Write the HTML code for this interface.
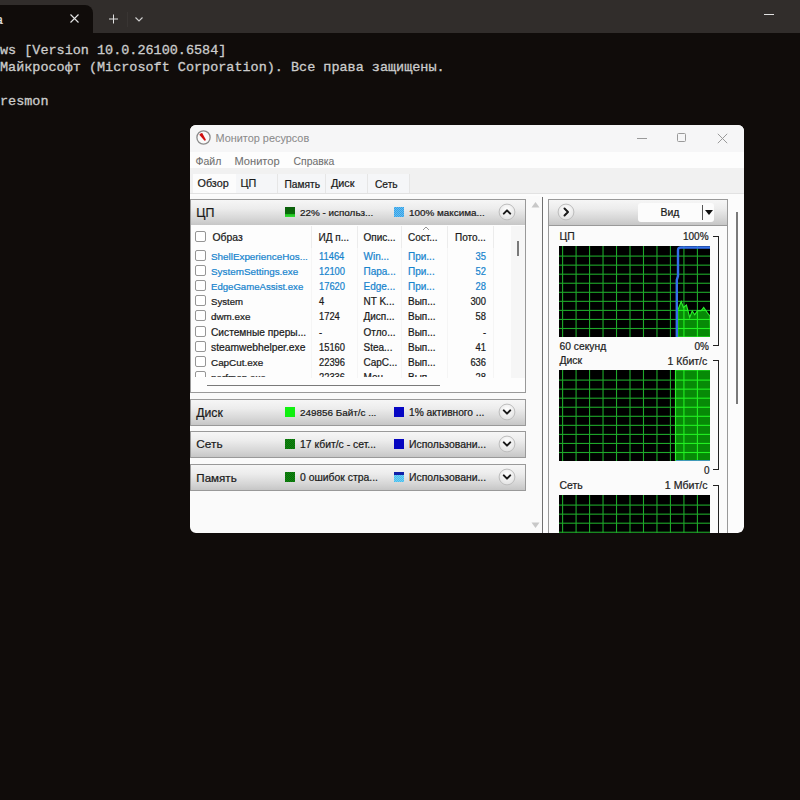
<!DOCTYPE html>
<html><head><meta charset="utf-8"><style>
html,body{margin:0;padding:0;width:800px;height:800px;overflow:hidden;background:#100c0a}
.t{position:absolute;white-space:pre;-webkit-text-stroke:0.22px currentColor}
.r{position:absolute}
</style></head><body>
<div class="r" style="left:0px;top:0px;width:800px;height:33px;background:#312d2b"></div>
<div class="r" style="left:-20px;top:5px;width:113px;height:28px;background:#100c0a;border-radius:0 8px 0 0"></div>
<div class="t " style="left:-4px;top:14px;font-size:12px;line-height:12px;color:#e8e8e8;font-family:'Liberation Sans',sans-serif;">а</div>
<svg class="r" style="left:70px;top:14px" width="9" height="9" viewBox="0 0 9 9"><path d="M0.5 0.5L8.5 8.5M8.5 0.5L0.5 8.5" stroke="#e4e4e4" stroke-width="1.1"/></svg>
<svg class="r" style="left:107px;top:13px" width="12" height="12" viewBox="0 0 12 12"><path d="M6.5 1.5V10.5M2 6H11" stroke="#e0e0e0" stroke-width="1"/></svg>
<div class="r" style="left:127px;top:12px;width:1px;height:15px;background:#393533"></div>
<svg class="r" style="left:134px;top:15px" width="10" height="8" viewBox="0 0 10 8"><path d="M1.5 2.5L5 6L8.5 2.5" stroke="#d0d0d0" stroke-width="1.1" fill="none"/></svg>
<div class="r" style="left:764px;top:14px;width:10px;height:1.2px;background:#e0e0e0"></div>
<div class="t " style="left:0px;top:44px;font-size:13.47px;line-height:13.47px;color:#cccccc;font-family:'Liberation Mono',monospace;-webkit-text-stroke:0.3px currentColor">ws [Version 10.0.26100.6584]</div>
<div class="t " style="left:0px;top:61px;font-size:13.47px;line-height:13.47px;color:#cccccc;font-family:'Liberation Mono',monospace;-webkit-text-stroke:0.3px currentColor">Майкрософт (Microsoft Corporation). Все права защищены.</div>
<div class="t " style="left:0px;top:95px;font-size:13.47px;line-height:13.47px;color:#cccccc;font-family:'Liberation Mono',monospace;-webkit-text-stroke:0.3px currentColor">resmon</div>
<div class="r" style="left:190px;top:125px;width:554px;height:408px;background:#fcfcfc;border-radius:6px;overflow:hidden"></div>
<div class="r" style="left:190px;top:125px;width:554px;height:27px;background:#f6f6f7;border-radius:6px 6px 0 0"></div>
<div class="r" style="left:190px;top:152px;width:554px;height:16px;background:#fdfdfd"></div>
<svg class="r" style="left:195px;top:129px" width="17" height="17" viewBox="0 0 17 17"><circle cx="8.5" cy="8.5" r="6.6" fill="#fafafa" stroke="#8c8c8c" stroke-width="1.3"/><path d="M6.6 3.4 Q5.0 3.2 3.7 5.2 L8.7 11.0 Q9.8 11.5 10.3 10.2Z" fill="#d01010" transform="translate(0.6 0.5)"/></svg>
<div class="t " style="left:215.5px;top:133px;font-size:10.9px;line-height:10.9px;color:#8a8a8a;font-family:'Liberation Sans',sans-serif;-webkit-text-stroke:0.05px currentColor">Монитор ресурсов</div>
<div class="r" style="left:637px;top:138px;width:10px;height:1px;background:#9a9a9a"></div>
<div class="r" style="left:677px;top:133px;width:9px;height:9px;border:1px solid #9a9a9a;box-sizing:border-box;border-radius:1.5px"></div>
<svg class="r" style="left:717px;top:133px" width="11" height="11" viewBox="0 0 11 11"><path d="M0.8 0.8L10.2 10.2M10.2 0.8L0.8 10.2" stroke="#9a9a9a" stroke-width="1"/></svg>
<div class="t " style="left:195.5px;top:156px;font-size:10.5px;line-height:10.5px;color:#707070;font-family:'Liberation Sans',sans-serif;-webkit-text-stroke:0.08px currentColor">Файл</div>
<div class="t " style="left:234.5px;top:156px;font-size:11.1px;line-height:11.1px;color:#707070;font-family:'Liberation Sans',sans-serif;-webkit-text-stroke:0.08px currentColor">Монитор</div>
<div class="t " style="left:293.5px;top:157px;font-size:10.4px;line-height:10.4px;color:#707070;font-family:'Liberation Sans',sans-serif;-webkit-text-stroke:0.08px currentColor">Справка</div>
<div class="r" style="left:190px;top:168px;width:554px;height:25px;background:#f1f1f1"></div>
<div class="r" style="left:190px;top:193px;width:554px;height:1px;background:#e2e2e2"></div>
<div class="r" style="left:193px;top:174px;width:43px;height:19px;background:#fcfcfc"></div>
<div class="r" style="left:236px;top:174px;width:42px;height:19px;background:#f5f6f8;border-right:1px solid #e6e6e6;box-sizing:border-box"></div>
<div class="r" style="left:278px;top:174px;width:48px;height:19px;background:#f5f6f8;border-right:1px solid #e6e6e6;box-sizing:border-box"></div>
<div class="r" style="left:326px;top:174px;width:42px;height:19px;background:#f5f6f8;border-right:1px solid #e6e6e6;box-sizing:border-box"></div>
<div class="r" style="left:368px;top:174px;width:42px;height:19px;background:#f5f6f8;border-right:1px solid #e6e6e6;box-sizing:border-box"></div>
<div class="t " style="left:197.5px;top:178px;font-size:10.8px;line-height:10.8px;color:#1a1a1a;font-family:'Liberation Sans',sans-serif;">Обзор</div>
<div class="t " style="left:240.5px;top:178px;font-size:10.8px;line-height:10.8px;color:#1a1a1a;font-family:'Liberation Sans',sans-serif;">ЦП</div>
<div class="t " style="left:284.5px;top:180px;font-size:10.2px;line-height:10.2px;color:#1a1a1a;font-family:'Liberation Sans',sans-serif;">Память</div>
<div class="t " style="left:331px;top:178px;font-size:10.8px;line-height:10.8px;color:#1a1a1a;font-family:'Liberation Sans',sans-serif;">Диск</div>
<div class="t " style="left:375px;top:180px;font-size:10.2px;line-height:10.2px;color:#1a1a1a;font-family:'Liberation Sans',sans-serif;">Сеть</div>
<div class="r" style="left:190px;top:196px;width:353px;height:337px;background:#fafafa"></div>
<div class="r" style="left:190px;top:199px;width:336px;height:27px;background:linear-gradient(#f6f6f6 0%,#ececec 35%,#d6d6d6 75%,#c6c6c6 100%);border:1px solid #999;box-sizing:border-box"></div>
<div class="t " style="left:196.3px;top:207px;font-size:12.4px;line-height:12.4px;color:#1a1a1a;font-family:'Liberation Sans',sans-serif;">ЦП</div>
<div class="r" style="left:285px;top:207px;width:10px;height:10px;background:linear-gradient(#0a5e0a 0,#0a6e0a 65%,#20c020 75%,#34e034 100%)"></div>
<div class="t " style="left:300px;top:208px;font-size:9.9px;line-height:9.9px;color:#1a1a1a;font-family:'Liberation Sans',sans-serif;">22% - использ...</div>
<div class="r" style="left:394px;top:207px;width:10px;height:10px;background:repeating-conic-gradient(#3a9ee6 0 25%,#62c2f2 0 50%) 0 0/2px 2px"></div>
<div class="t " style="left:409px;top:208px;font-size:9.9px;line-height:9.9px;color:#1a1a1a;font-family:'Liberation Sans',sans-serif;">100% максима...</div>
<svg class="r" style="left:496.5px;top:201.6px" width="20" height="20" viewBox="0 0 20 20"><defs><radialGradient id="cg199" cx="50%" cy="35%" r="65%"><stop offset="0" stop-color="#ffffff"/><stop offset="1" stop-color="#e2e2e2"/></radialGradient></defs><circle cx="10" cy="10" r="7.9" fill="url(#cg199)" stroke="#bdbdbd" stroke-width="1"/><path d="M6.8 11.6L10 8.4L13.2 11.6" stroke="#1a1a1a" stroke-width="2" fill="none" stroke-linecap="round" stroke-linejoin="round"/></svg>
<div class="r" style="left:190px;top:225px;width:336px;height:168px;background:#fdfdfd;border-left:1px solid #999;border-right:1px solid #999;border-bottom:1px solid #999;box-sizing:border-box"></div>
<div class="r" style="left:311px;top:226px;width:1px;height:152px;background:#f5f5f5"></div>
<div class="r" style="left:311px;top:226px;width:1px;height:22px;background:#ececec"></div>
<div class="r" style="left:357px;top:226px;width:1px;height:152px;background:#f5f5f5"></div>
<div class="r" style="left:357px;top:226px;width:1px;height:22px;background:#ececec"></div>
<div class="r" style="left:401px;top:226px;width:1px;height:152px;background:#f5f5f5"></div>
<div class="r" style="left:401px;top:226px;width:1px;height:22px;background:#ececec"></div>
<div class="r" style="left:447px;top:226px;width:1px;height:152px;background:#f5f5f5"></div>
<div class="r" style="left:447px;top:226px;width:1px;height:22px;background:#ececec"></div>
<div class="r" style="left:493px;top:226px;width:1px;height:152px;background:#f5f5f5"></div>
<div class="r" style="left:493px;top:226px;width:1px;height:22px;background:#ececec"></div>
<div class="r" style="left:195px;top:231px;width:11px;height:11px;border:1px solid #959595;border-radius:2px;box-sizing:border-box;background:#fff"></div>
<div class="t " style="left:212.5px;top:233px;font-size:10.4px;line-height:10.4px;color:#1a1a1a;font-family:'Liberation Sans',sans-serif;">Образ</div>
<div class="t " style="left:318.5px;top:233px;font-size:10.0px;line-height:10.0px;color:#1a1a1a;font-family:'Liberation Sans',sans-serif;">ИД п...</div>
<div class="t " style="left:363.5px;top:233px;font-size:10.0px;line-height:10.0px;color:#1a1a1a;font-family:'Liberation Sans',sans-serif;">Опис...</div>
<div class="t " style="left:408px;top:233px;font-size:10.0px;line-height:10.0px;color:#1a1a1a;font-family:'Liberation Sans',sans-serif;">Сост...</div>
<div class="t " style="left:455px;top:233px;font-size:10.0px;line-height:10.0px;color:#1a1a1a;font-family:'Liberation Sans',sans-serif;">Пото...</div>
<svg class="r" style="left:422px;top:225.8px" width="8" height="5" viewBox="0 0 8 5"><path d="M1 4L4 1L7 4" stroke="#888" stroke-width="0.9" fill="none"/></svg>
<div class="r" style="left:191px;top:245px;width:320px;height:131.5px;overflow:hidden">
<div class="r" style="left:4px;top:4.600000000000023px;width:11px;height:11px;border:1px solid #959595;border-radius:2px;box-sizing:border-box;background:#fff"></div>
<div class="t " style="left:20px;top:7px;font-size:9.85px;line-height:9.85px;color:#1784cd;font-family:'Liberation Sans',sans-serif;">ShellExperienceHos...</div>
<div class="t " style="left:127.5px;top:7px;font-size:10.4px;line-height:10.4px;color:#1784cd;font-family:'Liberation Sans',sans-serif;transform:scaleX(0.9);transform-origin:0 0">11464</div>
<div class="t " style="left:172.5px;top:7px;font-size:10px;line-height:10px;color:#1784cd;font-family:'Liberation Sans',sans-serif;">Win...</div>
<div class="t " style="left:217px;top:7px;font-size:10px;line-height:10px;color:#1784cd;font-family:'Liberation Sans',sans-serif;">При...</div>
<div class="t" style="left:229px;width:66px;text-align:right;top:7px;font-size:10.4px;line-height:10.4px;transform:scaleX(0.9);transform-origin:100% 0;color:#1784cd;font-family:'Liberation Sans',sans-serif">35</div>
<div class="r" style="left:4px;top:19.82000000000005px;width:11px;height:11px;border:1px solid #959595;border-radius:2px;box-sizing:border-box;background:#fff"></div>
<div class="t " style="left:20px;top:22px;font-size:9.9px;line-height:9.9px;color:#1784cd;font-family:'Liberation Sans',sans-serif;">SystemSettings.exe</div>
<div class="t " style="left:127.5px;top:22px;font-size:10.4px;line-height:10.4px;color:#1784cd;font-family:'Liberation Sans',sans-serif;transform:scaleX(0.9);transform-origin:0 0">12100</div>
<div class="t " style="left:172.5px;top:22px;font-size:10px;line-height:10px;color:#1784cd;font-family:'Liberation Sans',sans-serif;">Пара...</div>
<div class="t " style="left:217px;top:22px;font-size:10px;line-height:10px;color:#1784cd;font-family:'Liberation Sans',sans-serif;">При...</div>
<div class="t" style="left:229px;width:66px;text-align:right;top:22px;font-size:10.4px;line-height:10.4px;transform:scaleX(0.9);transform-origin:100% 0;color:#1784cd;font-family:'Liberation Sans',sans-serif">52</div>
<div class="r" style="left:4px;top:35.04000000000002px;width:11px;height:11px;border:1px solid #959595;border-radius:2px;box-sizing:border-box;background:#fff"></div>
<div class="t " style="left:20px;top:37px;font-size:9.6px;line-height:9.6px;color:#1784cd;font-family:'Liberation Sans',sans-serif;">EdgeGameAssist.exe</div>
<div class="t " style="left:127.5px;top:37px;font-size:10.4px;line-height:10.4px;color:#1784cd;font-family:'Liberation Sans',sans-serif;transform:scaleX(0.9);transform-origin:0 0">17620</div>
<div class="t " style="left:172.5px;top:37px;font-size:10px;line-height:10px;color:#1784cd;font-family:'Liberation Sans',sans-serif;">Edge...</div>
<div class="t " style="left:217px;top:37px;font-size:10px;line-height:10px;color:#1784cd;font-family:'Liberation Sans',sans-serif;">При...</div>
<div class="t" style="left:229px;width:66px;text-align:right;top:37px;font-size:10.4px;line-height:10.4px;transform:scaleX(0.9);transform-origin:100% 0;color:#1784cd;font-family:'Liberation Sans',sans-serif">28</div>
<div class="r" style="left:4px;top:50.26000000000005px;width:11px;height:11px;border:1px solid #959595;border-radius:2px;box-sizing:border-box;background:#fff"></div>
<div class="t " style="left:20px;top:52px;font-size:9.6px;line-height:9.6px;color:#1a1a1a;font-family:'Liberation Sans',sans-serif;">System</div>
<div class="t " style="left:127.5px;top:52px;font-size:10.4px;line-height:10.4px;color:#1a1a1a;font-family:'Liberation Sans',sans-serif;transform:scaleX(0.9);transform-origin:0 0">4</div>
<div class="t " style="left:172.5px;top:52px;font-size:10px;line-height:10px;color:#1a1a1a;font-family:'Liberation Sans',sans-serif;">NT K...</div>
<div class="t " style="left:217px;top:52px;font-size:10px;line-height:10px;color:#1a1a1a;font-family:'Liberation Sans',sans-serif;">Вып...</div>
<div class="t" style="left:229px;width:66px;text-align:right;top:52px;font-size:10.4px;line-height:10.4px;transform:scaleX(0.9);transform-origin:100% 0;color:#1a1a1a;font-family:'Liberation Sans',sans-serif">300</div>
<div class="r" style="left:4px;top:65.48000000000002px;width:11px;height:11px;border:1px solid #959595;border-radius:2px;box-sizing:border-box;background:#fff"></div>
<div class="t " style="left:20px;top:67px;font-size:9.9px;line-height:9.9px;color:#1a1a1a;font-family:'Liberation Sans',sans-serif;">dwm.exe</div>
<div class="t " style="left:127.5px;top:67px;font-size:10.4px;line-height:10.4px;color:#1a1a1a;font-family:'Liberation Sans',sans-serif;transform:scaleX(0.9);transform-origin:0 0">1724</div>
<div class="t " style="left:172.5px;top:67px;font-size:10px;line-height:10px;color:#1a1a1a;font-family:'Liberation Sans',sans-serif;">Дисп...</div>
<div class="t " style="left:217px;top:67px;font-size:10px;line-height:10px;color:#1a1a1a;font-family:'Liberation Sans',sans-serif;">Вып...</div>
<div class="t" style="left:229px;width:66px;text-align:right;top:67px;font-size:10.4px;line-height:10.4px;transform:scaleX(0.9);transform-origin:100% 0;color:#1a1a1a;font-family:'Liberation Sans',sans-serif">58</div>
<div class="r" style="left:4px;top:80.70000000000005px;width:11px;height:11px;border:1px solid #959595;border-radius:2px;box-sizing:border-box;background:#fff"></div>
<div class="t " style="left:20px;top:83px;font-size:10.2px;line-height:10.2px;color:#1a1a1a;font-family:'Liberation Sans',sans-serif;">Системные преры...</div>
<div class="t " style="left:127.5px;top:83px;font-size:10.4px;line-height:10.4px;color:#1a1a1a;font-family:'Liberation Sans',sans-serif;transform:scaleX(0.9);transform-origin:0 0">-</div>
<div class="t " style="left:172.5px;top:83px;font-size:10px;line-height:10px;color:#1a1a1a;font-family:'Liberation Sans',sans-serif;">Отло...</div>
<div class="t " style="left:217px;top:83px;font-size:10px;line-height:10px;color:#1a1a1a;font-family:'Liberation Sans',sans-serif;">Вып...</div>
<div class="t" style="left:229px;width:66px;text-align:right;top:83px;font-size:10.4px;line-height:10.4px;transform:scaleX(0.9);transform-origin:100% 0;color:#1a1a1a;font-family:'Liberation Sans',sans-serif">-</div>
<div class="r" style="left:4px;top:95.92000000000002px;width:11px;height:11px;border:1px solid #959595;border-radius:2px;box-sizing:border-box;background:#fff"></div>
<div class="t " style="left:20px;top:98px;font-size:10.3px;line-height:10.3px;color:#1a1a1a;font-family:'Liberation Sans',sans-serif;">steamwebhelper.exe</div>
<div class="t " style="left:127.5px;top:98px;font-size:10.4px;line-height:10.4px;color:#1a1a1a;font-family:'Liberation Sans',sans-serif;transform:scaleX(0.9);transform-origin:0 0">15160</div>
<div class="t " style="left:172.5px;top:98px;font-size:10px;line-height:10px;color:#1a1a1a;font-family:'Liberation Sans',sans-serif;">Stea...</div>
<div class="t " style="left:217px;top:98px;font-size:10px;line-height:10px;color:#1a1a1a;font-family:'Liberation Sans',sans-serif;">Вып...</div>
<div class="t" style="left:229px;width:66px;text-align:right;top:98px;font-size:10.4px;line-height:10.4px;transform:scaleX(0.9);transform-origin:100% 0;color:#1a1a1a;font-family:'Liberation Sans',sans-serif">41</div>
<div class="r" style="left:4px;top:111.14000000000004px;width:11px;height:11px;border:1px solid #959595;border-radius:2px;box-sizing:border-box;background:#fff"></div>
<div class="t " style="left:20px;top:113px;font-size:9.9px;line-height:9.9px;color:#1a1a1a;font-family:'Liberation Sans',sans-serif;">CapCut.exe</div>
<div class="t " style="left:127.5px;top:113px;font-size:10.4px;line-height:10.4px;color:#1a1a1a;font-family:'Liberation Sans',sans-serif;transform:scaleX(0.9);transform-origin:0 0">22396</div>
<div class="t " style="left:172.5px;top:113px;font-size:10px;line-height:10px;color:#1a1a1a;font-family:'Liberation Sans',sans-serif;">CapC...</div>
<div class="t " style="left:217px;top:113px;font-size:10px;line-height:10px;color:#1a1a1a;font-family:'Liberation Sans',sans-serif;">Вып...</div>
<div class="t" style="left:229px;width:66px;text-align:right;top:113px;font-size:10.4px;line-height:10.4px;transform:scaleX(0.9);transform-origin:100% 0;color:#1a1a1a;font-family:'Liberation Sans',sans-serif">636</div>
<div class="r" style="left:4px;top:126.36000000000001px;width:11px;height:11px;border:1px solid #959595;border-radius:2px;box-sizing:border-box;background:#fff"></div>
<div class="t " style="left:20px;top:128px;font-size:9.9px;line-height:9.9px;color:#1a1a1a;font-family:'Liberation Sans',sans-serif;">perfmon.exe</div>
<div class="t " style="left:127.5px;top:128px;font-size:10.4px;line-height:10.4px;color:#1a1a1a;font-family:'Liberation Sans',sans-serif;transform:scaleX(0.9);transform-origin:0 0">22336</div>
<div class="t " style="left:172.5px;top:128px;font-size:10px;line-height:10px;color:#1a1a1a;font-family:'Liberation Sans',sans-serif;">Мон...</div>
<div class="t " style="left:217px;top:128px;font-size:10px;line-height:10px;color:#1a1a1a;font-family:'Liberation Sans',sans-serif;">Вып...</div>
<div class="t" style="left:229px;width:66px;text-align:right;top:128px;font-size:10.4px;line-height:10.4px;transform:scaleX(0.9);transform-origin:100% 0;color:#1a1a1a;font-family:'Liberation Sans',sans-serif">28</div>
</div>
<div class="r" style="left:511px;top:226px;width:14px;height:152px;background:#f6f6f6"></div>
<div class="r" style="left:517px;top:241px;width:1.6px;height:15px;background:#7a7a7a"></div>
<div class="r" style="left:207px;top:384.5px;width:233px;height:1.5px;background:#7a7a7a"></div>
<div class="r" style="left:190px;top:399px;width:336px;height:27px;background:linear-gradient(#f6f6f6 0%,#ececec 35%,#d6d6d6 75%,#c6c6c6 100%);border:1px solid #999;box-sizing:border-box"></div>
<div class="t " style="left:196.3px;top:407px;font-size:12.2px;line-height:12.2px;color:#1a1a1a;font-family:'Liberation Sans',sans-serif;">Диск</div>
<div class="r" style="left:285px;top:407px;width:10px;height:10px;background:#10f010"></div>
<div class="t " style="left:300px;top:408px;font-size:9.9px;line-height:9.9px;color:#1a1a1a;font-family:'Liberation Sans',sans-serif;">249856 Байт/с ...</div>
<div class="r" style="left:394px;top:407px;width:10px;height:10px;background:#0606c4"></div>
<div class="t " style="left:409px;top:408px;font-size:9.9px;line-height:9.9px;color:#1a1a1a;font-family:'Liberation Sans',sans-serif;"><span style="font-size:10.2px">1% активного ...</span></div>
<svg class="r" style="left:496.5px;top:401.6px" width="20" height="20" viewBox="0 0 20 20"><defs><radialGradient id="cg399" cx="50%" cy="35%" r="65%"><stop offset="0" stop-color="#ffffff"/><stop offset="1" stop-color="#e2e2e2"/></radialGradient></defs><circle cx="10" cy="10" r="7.9" fill="url(#cg399)" stroke="#bdbdbd" stroke-width="1"/><path d="M6.8 8.4L10 11.6L13.2 8.4" stroke="#1a1a1a" stroke-width="2" fill="none" stroke-linecap="round" stroke-linejoin="round"/></svg>
<div class="r" style="left:190px;top:431px;width:336px;height:27px;background:linear-gradient(#f6f6f6 0%,#ececec 35%,#d6d6d6 75%,#c6c6c6 100%);border:1px solid #999;box-sizing:border-box"></div>
<div class="t " style="left:196.3px;top:439px;font-size:11.8px;line-height:11.8px;color:#1a1a1a;font-family:'Liberation Sans',sans-serif;">Сеть</div>
<div class="r" style="left:285px;top:439px;width:10px;height:10px;background:repeating-conic-gradient(#0a6a0a 0 25%,#108a10 0 50%) 0 0/2px 2px"></div>
<div class="t " style="left:300px;top:440px;font-size:9.9px;line-height:9.9px;color:#1a1a1a;font-family:'Liberation Sans',sans-serif;"><span style="font-size:10.4px">17 кбит/с - сет...</span></div>
<div class="r" style="left:394px;top:439px;width:10px;height:10px;background:#0606c0"></div>
<div class="t " style="left:409px;top:440px;font-size:9.9px;line-height:9.9px;color:#1a1a1a;font-family:'Liberation Sans',sans-serif;"><span style="font-size:10.4px">Использовани...</span></div>
<svg class="r" style="left:496.5px;top:433.6px" width="20" height="20" viewBox="0 0 20 20"><defs><radialGradient id="cg431" cx="50%" cy="35%" r="65%"><stop offset="0" stop-color="#ffffff"/><stop offset="1" stop-color="#e2e2e2"/></radialGradient></defs><circle cx="10" cy="10" r="7.9" fill="url(#cg431)" stroke="#bdbdbd" stroke-width="1"/><path d="M6.8 8.4L10 11.6L13.2 8.4" stroke="#1a1a1a" stroke-width="2" fill="none" stroke-linecap="round" stroke-linejoin="round"/></svg>
<div class="r" style="left:190px;top:464px;width:336px;height:27px;background:linear-gradient(#f6f6f6 0%,#ececec 35%,#d6d6d6 75%,#c6c6c6 100%);border:1px solid #999;box-sizing:border-box"></div>
<div class="t " style="left:196.3px;top:472px;font-size:11.6px;line-height:11.6px;color:#1a1a1a;font-family:'Liberation Sans',sans-serif;">Память</div>
<div class="r" style="left:285px;top:472px;width:10px;height:10px;background:repeating-conic-gradient(#0a6a0a 0 25%,#108a10 0 50%) 0 0/2px 2px"></div>
<div class="t " style="left:300px;top:473px;font-size:9.9px;line-height:9.9px;color:#1a1a1a;font-family:'Liberation Sans',sans-serif;"><span style="font-size:10.4px">0 ошибок стра...</span></div>
<div class="r" style="left:394px;top:472px;width:10px;height:10px;background:linear-gradient(#1020a8 0 3px,transparent 3px),repeating-conic-gradient(#48bcec 0 25%,#70d0f4 0 50%) 0 0/2px 2px"></div>
<div class="t " style="left:409px;top:473px;font-size:9.9px;line-height:9.9px;color:#1a1a1a;font-family:'Liberation Sans',sans-serif;"><span style="font-size:10.4px">Использовани...</span></div>
<svg class="r" style="left:496.5px;top:466.6px" width="20" height="20" viewBox="0 0 20 20"><defs><radialGradient id="cg464" cx="50%" cy="35%" r="65%"><stop offset="0" stop-color="#ffffff"/><stop offset="1" stop-color="#e2e2e2"/></radialGradient></defs><circle cx="10" cy="10" r="7.9" fill="url(#cg464)" stroke="#bdbdbd" stroke-width="1"/><path d="M6.8 8.4L10 11.6L13.2 8.4" stroke="#1a1a1a" stroke-width="2" fill="none" stroke-linecap="round" stroke-linejoin="round"/></svg>
<svg class="r" style="left:531px;top:201px" width="9" height="7" viewBox="0 0 9 7"><path d="M0.5 6.5L4.5 1L8.5 6.5Z" fill="#c8c8c8"/></svg>
<svg class="r" style="left:531px;top:521.5px" width="9" height="7" viewBox="0 0 9 7"><path d="M0.5 0.5L4.5 6L8.5 0.5Z" fill="#c8c8c8"/></svg>
<div class="r" style="left:542px;top:197px;width:1px;height:336px;background:#707070"></div>
<div class="r" style="left:548px;top:199px;width:180px;height:334px;background:#fbfbfb;border:1px solid #999;border-bottom:none;box-sizing:border-box"></div>
<div class="r" style="left:548px;top:199px;width:180px;height:27px;background:linear-gradient(#f6f6f6 0%,#ececec 35%,#d6d6d6 75%,#c6c6c6 100%);border:1px solid #999;box-sizing:border-box"></div>
<svg class="r" style="left:556px;top:202px" width="20" height="20" viewBox="0 0 20 20"><defs><radialGradient id="cgR" cx="50%" cy="35%" r="65%"><stop offset="0" stop-color="#ffffff"/><stop offset="1" stop-color="#e2e2e2"/></radialGradient></defs><circle cx="10" cy="10" r="7.9" fill="url(#cgR)" stroke="#bdbdbd" stroke-width="1"/><path d="M8.5 6.5L12 10L8.5 13.5" stroke="#1a1a1a" stroke-width="2" fill="none" stroke-linecap="round" stroke-linejoin="round"/></svg>
<div class="r" style="left:638px;top:203px;width:76px;height:19px;background:#fcfcfc;border-radius:3px"></div>
<div class="t " style="left:660.5px;top:208px;font-size:10.4px;line-height:10.4px;color:#1a1a1a;font-family:'Liberation Sans',sans-serif;">Вид</div>
<div class="r" style="left:702px;top:205px;width:1px;height:15px;background:#555"></div>
<svg class="r" style="left:704px;top:209px" width="10" height="7" viewBox="0 0 10 7"><path d="M1 1H9L5 6Z" fill="#111"/></svg>
<div class="r" style="left:736px;top:212px;width:1.5px;height:191.5px;background:#7a7a7a"></div>
<svg class="r" style="left:559px;top:246px" width="151" height="91" viewBox="0 0 151 91"><rect width="151" height="91" fill="#000"/><g fill="#1ea82a"><rect x="3.05" y="0" width="1.1" height="91"/><rect x="16.53" y="0" width="1.1" height="91"/><rect x="30.01" y="0" width="1.1" height="91"/><rect x="43.49" y="0" width="1.1" height="91"/><rect x="56.97" y="0" width="1.1" height="91"/><rect x="70.45" y="0" width="1.1" height="91"/><rect x="83.93" y="0" width="1.1" height="91"/><rect x="97.41" y="0" width="1.1" height="91"/><rect x="110.89" y="0" width="1.1" height="91"/><rect x="124.37" y="0" width="1.1" height="91"/><rect x="137.85" y="0" width="1.1" height="91"/><rect x="0" y="9.55" width="151" height="1.1"/><rect x="0" y="18.60" width="151" height="1.1"/><rect x="0" y="27.65" width="151" height="1.1"/><rect x="0" y="36.70" width="151" height="1.1"/><rect x="0" y="45.75" width="151" height="1.1"/><rect x="0" y="54.80" width="151" height="1.1"/><rect x="0" y="63.85" width="151" height="1.1"/><rect x="0" y="72.90" width="151" height="1.1"/><rect x="0" y="81.95" width="151" height="1.1"/></g><clipPath id="cc1"><path d="M118.8,91 L118.8,64 L122.2,55.6 L124.4,61.5 L127.4,59 L130.7,71.5 L133.2,65 L135.7,68.7 L138.5,64.6 L142.2,64.6 L144.7,61.5 L148.5,67 L151.0,70 L151.5,91Z"/></clipPath><path d="M118.8,91 L118.8,64 L122.2,55.6 L124.4,61.5 L127.4,59 L130.7,71.5 L133.2,65 L135.7,68.7 L138.5,64.6 L142.2,64.6 L144.7,61.5 L148.5,67 L151.0,70 L151.5,91Z" fill="#078a07"/><g fill="#22f022" clip-path="url(#cc1)"><rect x="3.05" y="0" width="1.1" height="91"/><rect x="16.53" y="0" width="1.1" height="91"/><rect x="30.01" y="0" width="1.1" height="91"/><rect x="43.49" y="0" width="1.1" height="91"/><rect x="56.97" y="0" width="1.1" height="91"/><rect x="70.45" y="0" width="1.1" height="91"/><rect x="83.93" y="0" width="1.1" height="91"/><rect x="97.41" y="0" width="1.1" height="91"/><rect x="110.89" y="0" width="1.1" height="91"/><rect x="124.37" y="0" width="1.1" height="91"/><rect x="137.85" y="0" width="1.1" height="91"/><rect x="0" y="9.55" width="151" height="1.1"/><rect x="0" y="18.60" width="151" height="1.1"/><rect x="0" y="27.65" width="151" height="1.1"/><rect x="0" y="36.70" width="151" height="1.1"/><rect x="0" y="45.75" width="151" height="1.1"/><rect x="0" y="54.80" width="151" height="1.1"/><rect x="0" y="63.85" width="151" height="1.1"/><rect x="0" y="72.90" width="151" height="1.1"/><rect x="0" y="81.95" width="151" height="1.1"/></g><path d="M118.8,91 L118.8,64 L122.2,55.6 L124.4,61.5 L127.4,59 L130.7,71.5 L133.2,65 L135.7,68.7 L138.5,64.6 L142.2,64.6 L144.7,61.5 L148.5,67 L151.0,70 L151.5,91Z" fill="none" stroke="#2cf02c" stroke-width="1.1"/></svg>
<svg class="r" style="left:559px;top:246px" width="151" height="91" viewBox="1 0 151 91"><path d="M118.8 91 L118.8 34 L120 30 L120 4.5 Q120 1.5 123 1.5 L152 1.5" stroke="#3470ea" stroke-width="2.4" fill="none"/></svg>
<div class="t " style="left:559.5px;top:232px;font-size:10.4px;line-height:10.4px;color:#222;font-family:'Liberation Sans',sans-serif;">ЦП</div>
<div class="t " style="left:683px;top:232px;font-size:10px;line-height:10px;color:#222;font-family:'Liberation Sans',sans-serif;">100%</div>
<div class="t " style="left:559.5px;top:342px;font-size:10.3px;line-height:10.3px;color:#222;font-family:'Liberation Sans',sans-serif;">60 секунд</div>
<div class="t " style="left:694.5px;top:342px;font-size:10px;line-height:10px;color:#222;font-family:'Liberation Sans',sans-serif;">0%</div>
<div class="r" style="left:713px;top:236px;width:6px;height:1px;background:#222"></div>
<div class="r" style="left:718px;top:236px;width:1px;height:110px;background:#222"></div>
<div class="r" style="left:713px;top:345px;width:6px;height:1px;background:#222"></div>
<svg class="r" style="left:559px;top:370px" width="151" height="91" viewBox="0 0 151 91"><rect width="151" height="91" fill="#000"/><g fill="#1ea82a"><rect x="3.05" y="0" width="1.1" height="91"/><rect x="16.53" y="0" width="1.1" height="91"/><rect x="30.01" y="0" width="1.1" height="91"/><rect x="43.49" y="0" width="1.1" height="91"/><rect x="56.97" y="0" width="1.1" height="91"/><rect x="70.45" y="0" width="1.1" height="91"/><rect x="83.93" y="0" width="1.1" height="91"/><rect x="97.41" y="0" width="1.1" height="91"/><rect x="110.89" y="0" width="1.1" height="91"/><rect x="124.37" y="0" width="1.1" height="91"/><rect x="137.85" y="0" width="1.1" height="91"/><rect x="0" y="9.55" width="151" height="1.1"/><rect x="0" y="18.60" width="151" height="1.1"/><rect x="0" y="27.65" width="151" height="1.1"/><rect x="0" y="36.70" width="151" height="1.1"/><rect x="0" y="45.75" width="151" height="1.1"/><rect x="0" y="54.80" width="151" height="1.1"/><rect x="0" y="63.85" width="151" height="1.1"/><rect x="0" y="72.90" width="151" height="1.1"/><rect x="0" y="81.95" width="151" height="1.1"/></g><clipPath id="cc2"><path d="M116.5,0 L152.5,0 L152.5,91 L116.5,91Z"/></clipPath><path d="M116.5,0 L152.5,0 L152.5,91 L116.5,91Z" fill="#078a07"/><g fill="#22f022" clip-path="url(#cc2)"><rect x="3.05" y="0" width="1.1" height="91"/><rect x="16.53" y="0" width="1.1" height="91"/><rect x="30.01" y="0" width="1.1" height="91"/><rect x="43.49" y="0" width="1.1" height="91"/><rect x="56.97" y="0" width="1.1" height="91"/><rect x="70.45" y="0" width="1.1" height="91"/><rect x="83.93" y="0" width="1.1" height="91"/><rect x="97.41" y="0" width="1.1" height="91"/><rect x="110.89" y="0" width="1.1" height="91"/><rect x="124.37" y="0" width="1.1" height="91"/><rect x="137.85" y="0" width="1.1" height="91"/><rect x="0" y="9.55" width="151" height="1.1"/><rect x="0" y="18.60" width="151" height="1.1"/><rect x="0" y="27.65" width="151" height="1.1"/><rect x="0" y="36.70" width="151" height="1.1"/><rect x="0" y="45.75" width="151" height="1.1"/><rect x="0" y="54.80" width="151" height="1.1"/><rect x="0" y="63.85" width="151" height="1.1"/><rect x="0" y="72.90" width="151" height="1.1"/><rect x="0" y="81.95" width="151" height="1.1"/></g><path d="M116.5,0 L152.5,0 L152.5,91 L116.5,91Z" fill="none" stroke="#2cf02c" stroke-width="1.1"/></svg>
<div class="r" style="left:676px;top:460px;width:34px;height:1px;background:#4a90e0;opacity:0.8"></div>
<div class="t " style="left:559.5px;top:356px;font-size:10.4px;line-height:10.4px;color:#222;font-family:'Liberation Sans',sans-serif;">Диск</div>
<div class="t " style="left:667.5px;top:356px;font-size:10.5px;line-height:10.5px;color:#222;font-family:'Liberation Sans',sans-serif;">1 Кбит/с</div>
<div class="t " style="left:704px;top:466px;font-size:10px;line-height:10px;color:#222;font-family:'Liberation Sans',sans-serif;">0</div>
<div class="r" style="left:713px;top:360px;width:6px;height:1px;background:#222"></div>
<div class="r" style="left:718px;top:360px;width:1px;height:110px;background:#222"></div>
<div class="r" style="left:713px;top:469px;width:6px;height:1px;background:#222"></div>
<div class="t " style="left:559.5px;top:481px;font-size:10.4px;line-height:10.4px;color:#222;font-family:'Liberation Sans',sans-serif;">Сеть</div>
<div class="t " style="left:664.8px;top:480px;font-size:10.6px;line-height:10.6px;color:#222;font-family:'Liberation Sans',sans-serif;">1 Мбит/с</div>
<div class="r" style="left:713px;top:485px;width:6px;height:1px;background:#222"></div>
<div class="r" style="left:718px;top:485px;width:1px;height:48px;background:#222"></div>
<svg class="r" style="left:559px;top:495px" width="151" height="38" viewBox="0 0 151 38"><rect width="151" height="38" fill="#000"/><g fill="#1ea82a"><rect x="3.05" y="0" width="1.1" height="38"/><rect x="16.53" y="0" width="1.1" height="38"/><rect x="30.01" y="0" width="1.1" height="38"/><rect x="43.49" y="0" width="1.1" height="38"/><rect x="56.97" y="0" width="1.1" height="38"/><rect x="70.45" y="0" width="1.1" height="38"/><rect x="83.93" y="0" width="1.1" height="38"/><rect x="97.41" y="0" width="1.1" height="38"/><rect x="110.89" y="0" width="1.1" height="38"/><rect x="124.37" y="0" width="1.1" height="38"/><rect x="137.85" y="0" width="1.1" height="38"/><rect x="0" y="9.55" width="151" height="1.1"/><rect x="0" y="18.60" width="151" height="1.1"/><rect x="0" y="27.65" width="151" height="1.1"/><rect x="0" y="36.70" width="151" height="1.1"/></g></svg>
<svg class="r" style="left:190px;top:527px" width="6" height="6" viewBox="0 0 6 6"><path d="M0 0 L0 6 L6 6 A6 6 0 0 1 0 0Z" fill="#100c0a"/></svg>
<svg class="r" style="left:738px;top:527px" width="6" height="6" viewBox="0 0 6 6"><path d="M6 0 L6 6 L0 6 A6 6 0 0 0 6 0Z" fill="#100c0a"/></svg>
</body></html>
